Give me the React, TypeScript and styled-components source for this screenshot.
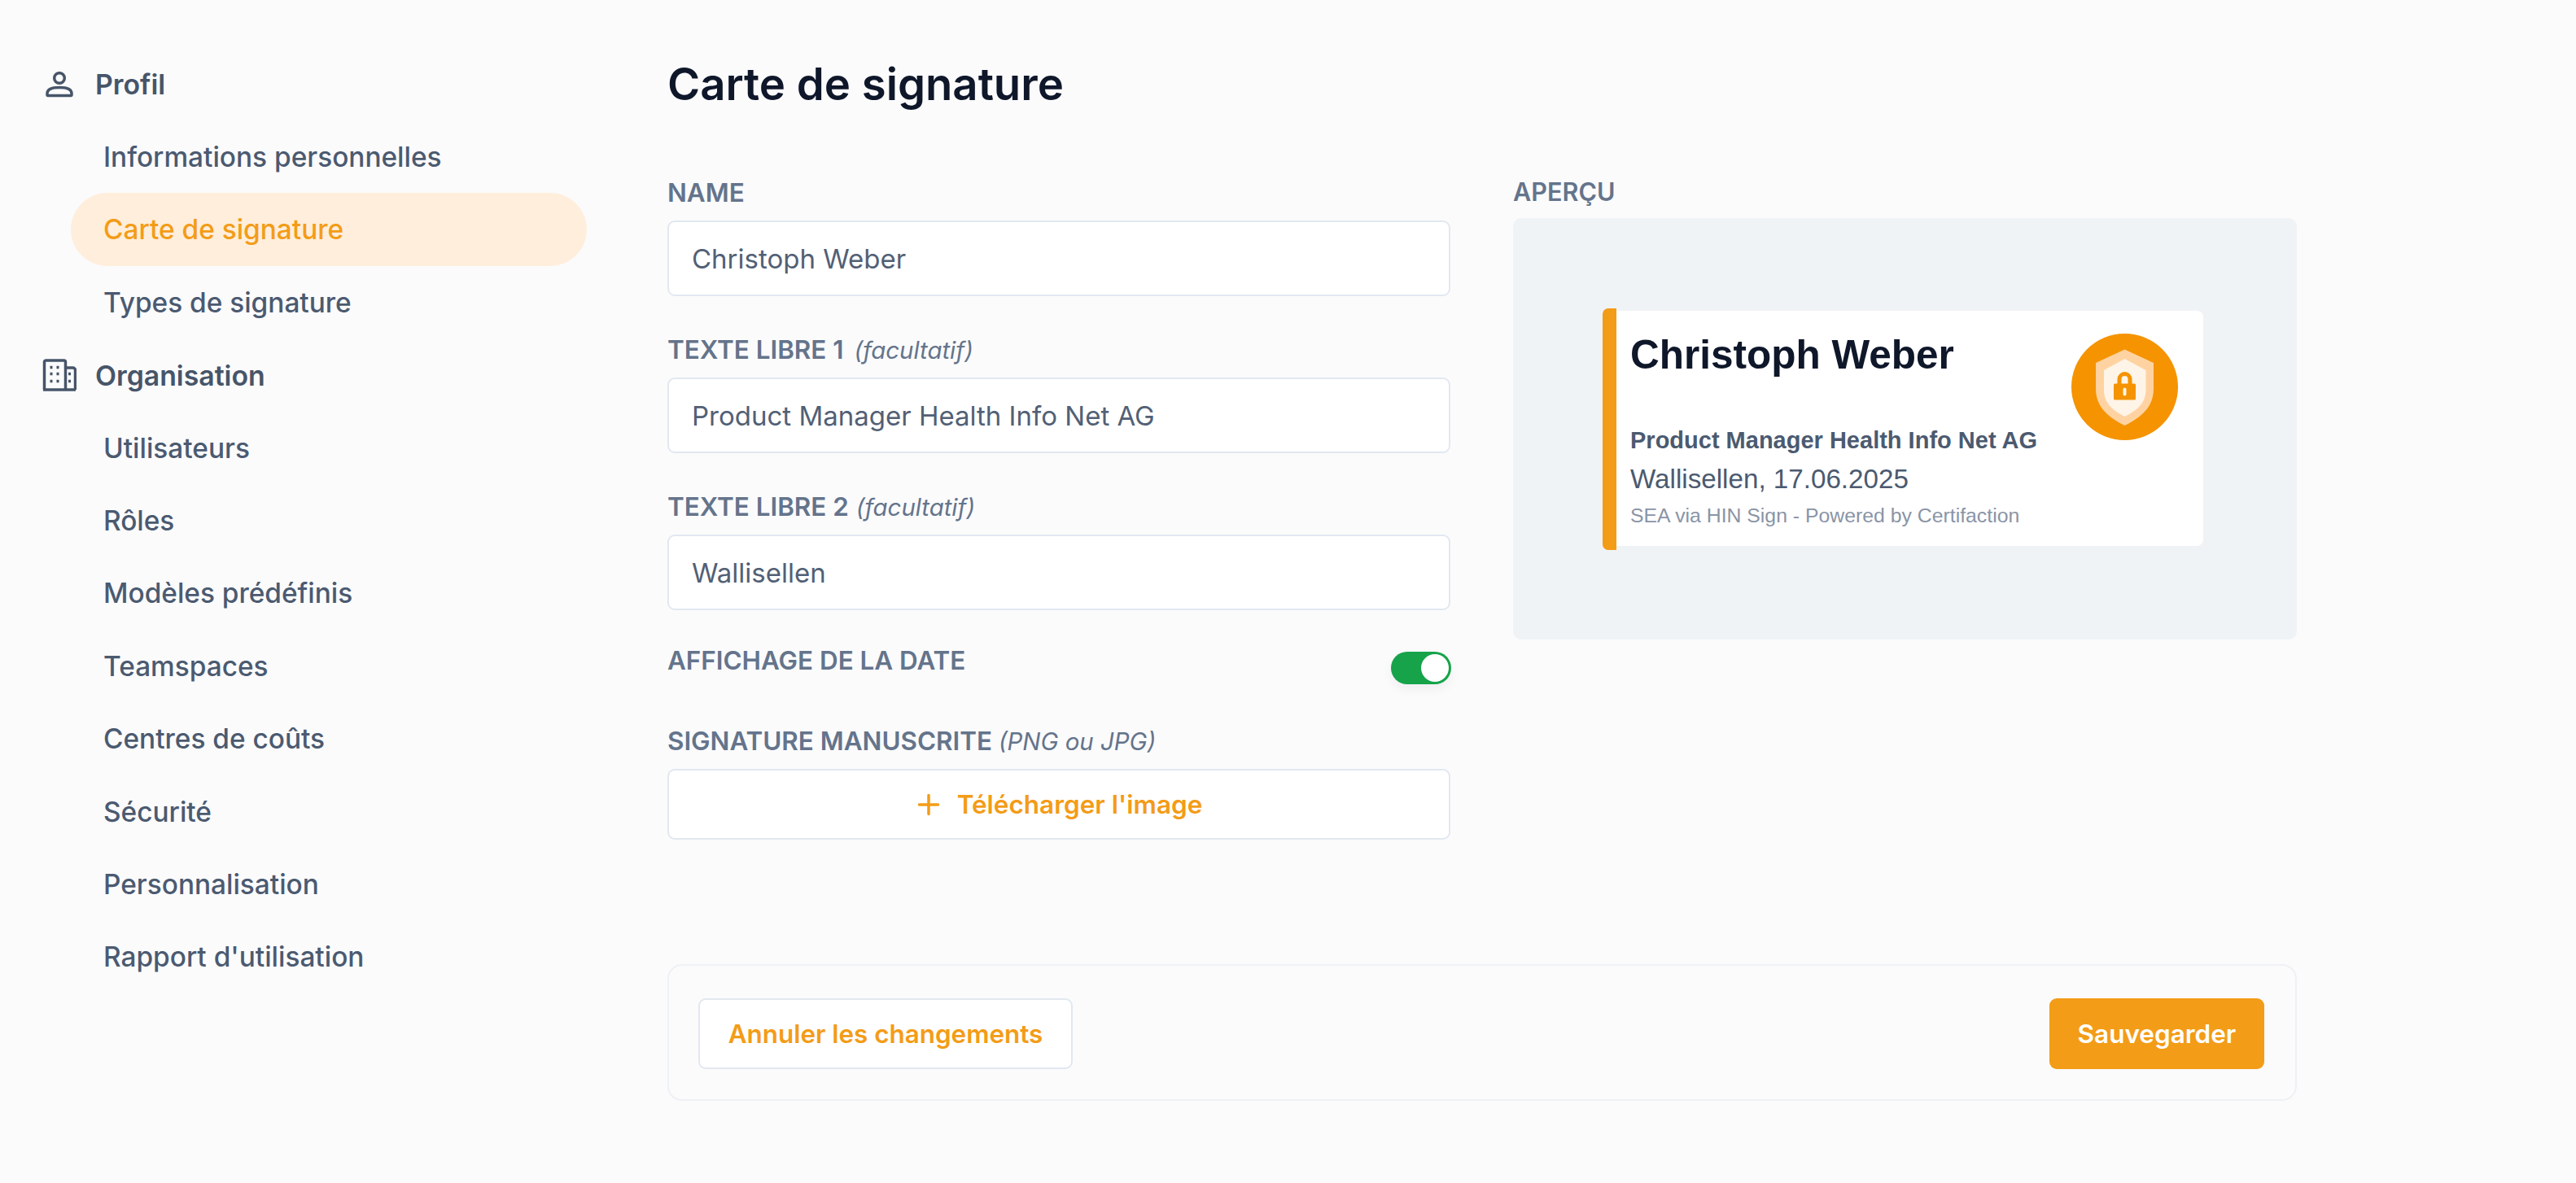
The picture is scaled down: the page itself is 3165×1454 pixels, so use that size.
import React from 'react'
import styled, { createGlobalStyle } from 'styled-components'

const GlobalStyle = createGlobalStyle`
  html, body {
    margin: 0;
    padding: 0;
    background: #fbfbfc;
    font-family: Inter, "Liberation Sans", sans-serif;
  }
  * {
    box-sizing: border-box;
  }
`

const Page = styled.div`
  display: flex;
  width: 3165px;
  height: 1454px;
  overflow: hidden;
`

const Sidebar = styled.nav`
  width: 820px;
  flex: none;
  padding: 59px 0 0 87px;
`

const SectionHead = styled.div`
  display: flex;
  align-items: center;
  gap: 23px;
  height: 89.4px;
  margin-left: -35px;
  color: #475569;
  font-size: 33.8px;
  font-weight: 600;
`

const IconSlot = styled.span`
  display: flex;
  justify-content: center;
  width: 42px;
  flex: none;
`

const NavItem = styled.a<{ $active?: boolean }>`
  display: flex;
  align-items: center;
  width: 634px;
  height: ${p => (p.$active ? '90.4px' : '89.4px')};
  margin-top: ${p => (p.$active ? '-1px' : '0')};
  padding-left: 40px;
  border-radius: 45px;
  font-size: 33.4px;
  font-weight: 500;
  color: ${p => (p.$active ? '#f39c17' : '#4b5a70')};
  background: ${p => (p.$active ? '#ffeedb' : 'transparent')};
`

const Main = styled.main`
  width: 2002px;
  flex: none;
  padding-top: 69px;
`

const Title = styled.h1`
  margin: 0 0 81px;
  height: 68px;
  line-height: 68px;
  font-size: 54.5px;
  font-weight: 600;
  color: #0f172a;
`

const Columns = styled.div`
  display: grid;
  grid-template-columns: 962px 963px;
  column-gap: 77px;
`

const Form = styled.div`
  display: flex;
  flex-direction: column;
`

const Label = styled.label`
  display: block;
  height: 37px;
  line-height: 39px;
  margin-bottom: 16px;
  font-size: 31.4px;
  font-weight: 600;
  color: #64748b;
`

const PreviewLabel = styled(Label)`
  margin-top: -2px;
  margin-bottom: 15px;
  font-size: 30.6px;
`

const Hint = styled.em<{ $gap?: number }>`
  margin-left: ${p => p.$gap ?? 0}px;
  font-weight: 400;
  font-size: 29.4px;
`

const Field = styled.div`
  margin-bottom: 47px;
`

const TextInput = styled.div`
  display: flex;
  align-items: center;
  height: 93px;
  padding: 0 28px;
  background: #fff;
  border: 2px solid #e2e8f0;
  border-radius: 9px;
  font-size: 33px;
  color: #526075;
`

const ToggleRow = styled.div`
  display: flex;
  justify-content: space-between;
  align-items: flex-start;
  height: 62px;
  margin-top: -4px;
  margin-bottom: 37px;
`

const Toggle = styled.span`
  display: flex;
  justify-content: flex-end;
  align-items: center;
  width: 74px;
  height: 40px;
  margin-top: 8px;
  margin-right: -1px;
  padding: 3px;
  border-radius: 20px;
  background: #16a34a;
  box-shadow: 0 6px 14px rgba(15, 23, 42, 0.05);
`

const Knob = styled.span`
  width: 34px;
  height: 34px;
  border-radius: 50%;
  background: #fff;
`

const UploadButton = styled.button`
  display: flex;
  justify-content: center;
  align-items: center;
  gap: 21px;
  width: 100%;
  height: 87px;
  padding-left: 8px;
  background: #fff;
  border: 2px solid #e2e8f0;
  border-radius: 9px;
  font-family: inherit;
  font-size: 31.5px;
  font-weight: 600;
  color: #f39c17;
`

const PreviewPanel = styled.div`
  display: flex;
  align-items: center;
  justify-content: center;
  height: 518px;
  background: #f0f3f6;
  border-radius: 10px;
`

const Card = styled.div`
  position: relative;
  display: flex;
  flex-direction: column;
  width: 738px;
  height: 289px;
  margin: -2px 0 0 -5px;
  padding: 26px 0 0 34px;
  background: #fff;
  border-radius: 8px;
  font-family: "Liberation Sans", Arial, sans-serif;
`

const CardStripe = styled.span`
  position: absolute;
  left: 0;
  top: -3px;
  bottom: -5px;
  width: 17px;
  background: #f39c17;
  border-radius: 7px 0 0 7px;
`

const CardName = styled.div`
  height: 56px;
  line-height: 56px;
  margin-bottom: 61px;
  font-size: 49.5px;
  font-weight: 700;
  color: #0f172a;
`

const CardCompany = styled.div`
  height: 32px;
  line-height: 32px;
  margin-bottom: 13px;
  font-size: 29px;
  font-weight: 700;
  color: #4b5a70;
`

const CardPlace = styled.div`
  height: 38px;
  line-height: 38px;
  margin-bottom: 11px;
  font-size: 33.2px;
  color: #4b5a70;
`

const CardSeal = styled.div`
  height: 30px;
  line-height: 30px;
  font-size: 24.8px;
  color: #8a94a6;
`

const Seal = styled.svg`
  position: absolute;
  right: 31px;
  top: 28px;
`

const ActionBar = styled.div`
  display: flex;
  justify-content: space-between;
  align-items: center;
  height: 168px;
  margin-top: 153px;
  padding: 3px 38px 0 36px;
  border: 2px solid #eef1f5;
  border-radius: 18px;
`

const GhostButton = styled.button`
  width: 460px;
  height: 87px;
  background: #fff;
  border: 2px solid #e2e8f0;
  border-radius: 9px;
  font-family: inherit;
  font-size: 31.4px;
  font-weight: 600;
  color: #f39c17;
`

const SaveButton = styled.button`
  width: 264px;
  height: 87px;
  background: #f39c17;
  border: 0;
  border-radius: 9px;
  font-family: inherit;
  font-size: 31.5px;
  font-weight: 600;
  color: #fff;
`

const PersonIcon = () => (
  <svg width="34" height="32" viewBox="0 0 34 32" fill="none" stroke="#475569" strokeWidth="3.5">
    <circle cx="17" cy="8" r="6.3" />
    <path d="M2 27c0-5 6-7.5 15-7.5s15 2.5 15 7.5v1.5a1 1 0 0 1-1 1H3a1 1 0 0 1-1-1z" strokeLinejoin="round" />
  </svg>
)

const BuildingIcon = () => (
  <svg width="42" height="40" viewBox="0 0 42 40" fill="none" stroke="#475569" strokeWidth="3.5">
    <path d="M2.5 38V4a2 2 0 0 1 2-2h22a2 2 0 0 1 2 2v34M28.5 11h9a3 3 0 0 1 3 3v24M1 38h40" />
    <path d="M9.5 10.5h3M17.5 10.5h3M9.5 18.5h3M17.5 18.5h3M9.5 27.5h3M17.5 27.5h3M32 18.5h3M32 27.5h3" />
  </svg>
)

const PlusIcon = () => (
  <svg width="28" height="28" viewBox="0 0 28 28" stroke="#f39c17" strokeWidth="3.5" strokeLinecap="round">
    <path d="M14 2.5v23M2.5 14h23" />
  </svg>
)

const SealIcon = () => (
  <Seal width="131" height="131" viewBox="0 0 131 131">
    <circle cx="65.5" cy="65.5" r="65.5" fill="#f59300" />
    <path d="M65.5 19.5L101 36v32c0 22-15 35-35.5 45C45 103 30 90 30 68V36z" fill="#ffd3a1" />
    <path d="M65.5 31L91.5 45v24c0 16-10 25-26 33C49.5 94 40 85 40 69V45z" fill="#fff4e8" />
    <path d="M59 63v-7a6.5 6.5 0 0 1 13 0v7" fill="none" stroke="#f59300" strokeWidth="5" />
    <rect x="52" y="61.5" width="27" height="20" rx="1.5" fill="#f59300" />
    <rect x="63.5" y="66.5" width="4" height="10" rx="2" fill="#fff4e8" />
  </Seal>
)

const firstGroup = ['Informations personnelles', 'Carte de signature', 'Types de signature']
const secondGroup = [
  'Utilisateurs',
  'Rôles',
  'Modèles prédéfinis',
  'Teamspaces',
  'Centres de coûts',
  'Sécurité',
  'Personnalisation',
  "Rapport d'utilisation"
]

export default function App() {
  return (
    <Page>
      <GlobalStyle />
      <Sidebar>
        <SectionHead>
          <IconSlot>
            <PersonIcon />
          </IconSlot>
          Profil
        </SectionHead>
        {firstGroup.map(item => (
          <NavItem key={item} $active={item === 'Carte de signature'}>
            {item}
          </NavItem>
        ))}
        <SectionHead>
          <IconSlot>
            <BuildingIcon />
          </IconSlot>
          Organisation
        </SectionHead>
        {secondGroup.map(item => (
          <NavItem key={item}>{item}</NavItem>
        ))}
      </Sidebar>
      <Main>
        <Title>Carte de signature</Title>
        <Columns>
          <Form>
            <Field>
              <Label>NAME</Label>
              <TextInput>Christoph Weber</TextInput>
            </Field>
            <Field>
              <Label>
                TEXTE LIBRE 1 <Hint $gap={5}>(facultatif)</Hint>
              </Label>
              <TextInput>Product Manager Health Info Net AG</TextInput>
            </Field>
            <Field>
              <Label>
                TEXTE LIBRE 2 <Hint $gap={1}>(facultatif)</Hint>
              </Label>
              <TextInput>Wallisellen</TextInput>
            </Field>
            <ToggleRow>
              <Label>AFFICHAGE DE LA DATE</Label>
              <Toggle>
                <Knob />
              </Toggle>
            </ToggleRow>
            <Label>
              SIGNATURE MANUSCRITE <Hint>(PNG ou JPG)</Hint>
            </Label>
            <UploadButton>
              <PlusIcon />
              Télécharger l'image
            </UploadButton>
          </Form>
          <div>
            <PreviewLabel>APERÇU</PreviewLabel>
            <PreviewPanel>
              <Card>
                <CardStripe />
                <CardName>Christoph Weber</CardName>
                <CardCompany>Product Manager Health Info Net AG</CardCompany>
                <CardPlace>Wallisellen, 17.06.2025</CardPlace>
                <CardSeal>SEA via HIN Sign - Powered by Certifaction</CardSeal>
                <SealIcon />
              </Card>
            </PreviewPanel>
          </div>
        </Columns>
        <ActionBar>
          <GhostButton>Annuler les changements</GhostButton>
          <SaveButton>Sauvegarder</SaveButton>
        </ActionBar>
      </Main>
    </Page>
  )
}
